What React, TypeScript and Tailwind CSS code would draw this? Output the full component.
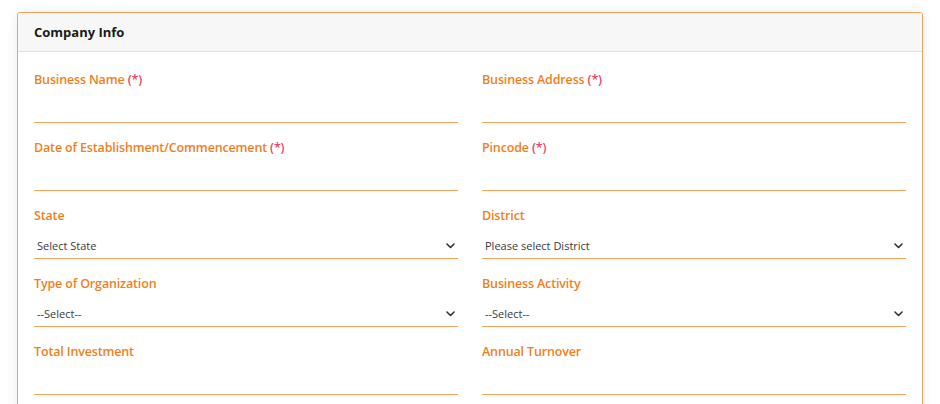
import React from "react";

const font = { fontFamily: '"Open Sans", "Noto Sans", sans-serif' };

function Chevron() {
  return (
    <svg width="9" height="6" viewBox="0 0 9 6" className="shrink-0">
      <path d="M1 1 L4.5 4.5 L8 1" fill="none" stroke="#333" strokeWidth="1.6" strokeLinecap="round" strokeLinejoin="round" />
    </svg>
  );
}

function Field({ label, req, select }: { label: string; req?: boolean; select?: string }) {
  return (
    <div className="flex flex-col">
      <div className="h-[18px] leading-[18px] text-[12.5px] font-semibold text-[#f07f1c] tracking-[-0.15px]">
        {label}
        {req && <span className="text-[#e8465e]"> (*)</span>}
      </div>
      <div className="h-[34px] border-b border-[#f5a55e] flex items-center pt-[9px] pl-[3px] pr-[3px]">
        {select && (
          <>
            <span className="flex-1 text-[11px] text-[#3a3a3a]">{select}</span>
            <Chevron />
          </>
        )}
      </div>
    </div>
  );
}

export default function App() {
  return (
    <div className="w-[940px] h-[404px] bg-white overflow-hidden pt-[12px] px-[17px]" style={font}>
      <div className="border border-[#f2a35c] rounded-[3px] shadow-[0_0_12px_rgba(0,0,0,0.08)] h-[420px] bg-white">
        <div className="h-[39px] bg-[#f7f7f7] border-b border-[#e2e2e2] rounded-t-[3px] flex items-center pt-[2px] px-[16px] text-[13px] font-bold text-[#1a1a1a]">
          Company Info
        </div>
        <div className="px-[16px] pt-[19px] grid grid-cols-2 gap-x-[24px] gap-y-[16px]">
          <Field label="Business Name" req />
          <Field label="Business Address" req />
          <Field label="Date of Establishment/Commencement" req />
          <Field label="Pincode" req />
          <Field label="State" select="Select State" />
          <Field label="District" select="Please select District" />
          <Field label="Type of Organization" select="--Select--" />
          <Field label="Business Activity" select="--Select--" />
          <Field label="Total Investment" />
          <Field label="Annual Turnover" />
        </div>
      </div>
    </div>
  );
}
